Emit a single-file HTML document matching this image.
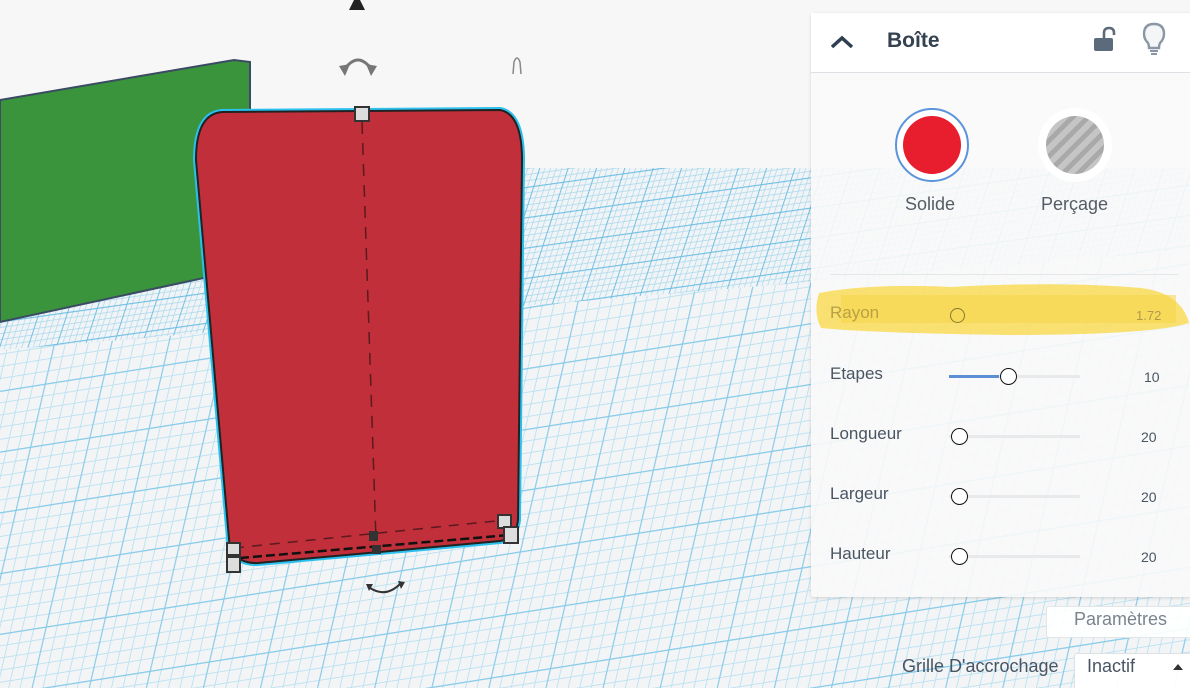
<!DOCTYPE html>
<html><head><meta charset="utf-8">
<style>
html,body{margin:0;padding:0;width:1190px;height:688px;overflow:hidden;background:#f7f7f7;font-family:"Liberation Sans","DejaVu Sans",sans-serif}
#scene{position:absolute;left:0;top:0;width:1190px;height:688px;overflow:hidden}
#panel{position:absolute;left:811px;top:13px;width:379px;height:584px;background:rgba(249,249,249,0.9);box-shadow:0 1px 3px rgba(0,0,0,.15);border-radius:3px 0 0 3px}
#hdr{height:59px;background:#fff;border-bottom:1px solid #dde0e4;position:relative}
.t{position:absolute;color:#3b4a5c;font-size:17px}
.lbl{position:absolute;left:19px;font-size:17px;color:#4a5563}
.val{position:absolute;left:330px;font-size:14px;color:#4a5563}
.track{position:absolute;left:138px;width:131px;height:3px;background:#e8e9ea}
.knob{position:absolute;width:15px;height:15px;border:1.5px solid #111;border-radius:50%;background:#fff;box-sizing:border-box}
</style></head><body>
<div id="scene">
<svg width="1190" height="688" style="position:absolute;left:0;top:0">
<defs>
<pattern id="gNear" width="60" height="60" patternUnits="userSpaceOnUse" patternTransform="translate(0,330) rotate(-9) skewX(-22)">
 <rect width="60" height="60" fill="#f3f4f5"/>
 <path d="M0,12H60M0,24H60M0,36H60M0,48H60M12,0V60M24,0V60M36,0V60M48,0V60" stroke="#bde2f2" stroke-width="1"/>
 <path d="M0,0.5H60M0.5,0V60" stroke="#86cbe9" stroke-width="1.5"/>
</pattern>
<pattern id="gFar" width="30" height="30" patternUnits="userSpaceOnUse" patternTransform="translate(0,170) rotate(-8) skewX(-26)">
 <rect width="30" height="30" fill="#f0f4f6"/>
 <path d="M0,6H30M0,12H30M0,18H30M0,24H30M6,0V30M12,0V30M18,0V30M24,0V30" stroke="#add9ec" stroke-width="0.8"/>
 <path d="M0,0.5H30M0.5,0V30" stroke="#6fbfe4" stroke-width="1.2"/>
</pattern>
</defs>
<polygon points="0,300 520,168 1190,168 1190,688 0,688" fill="url(#gNear)"/>
<polygon points="0,300 520,168 1190,168 1190,250 0,350" fill="url(#gFar)"/>
<!-- green box -->
<polygon points="0,100 234,60 250,62 250,268 0,322" fill="#3a943c" stroke="#3b4b63" stroke-width="2"/>
<!-- red box -->
<path d="M222,112 L500,110 Q522,114 522,160 L518,520 Q516,538 500,541 L258,563 Q240,564 230,550 L196,160 Q196,114 222,112 Z" fill="#c12f3a" stroke="#2bc0ee" stroke-width="6"/>
<path d="M222,112 L500,110 Q522,114 522,160 L518,520 Q516,538 500,541 L258,563 Q240,564 230,550 L196,160 Q196,114 222,112 Z" fill="#c12f3a" stroke="#222" stroke-width="2"/>
<line x1="362" y1="122" x2="376" y2="540" stroke="#5a1a1f" stroke-width="1.5" stroke-dasharray="12,9"/>
<line x1="234" y1="548" x2="505" y2="520" stroke="#5a1a1f" stroke-width="1.5" stroke-dasharray="10,8"/>
<line x1="240" y1="558" x2="510" y2="535" stroke="#111" stroke-width="2.5" stroke-dasharray="9,4"/>
<rect x="355" y="107" width="14" height="14" fill="#ddd" stroke="#333" stroke-width="2"/>
<rect x="369" y="531" width="9" height="10" fill="#333"/>
<rect x="372" y="545" width="9" height="9" fill="#333"/>
<rect x="227" y="543" width="13" height="12" fill="#ddd" stroke="#333" stroke-width="2"/>
<rect x="227" y="557" width="13" height="15" fill="#ddd" stroke="#333" stroke-width="2"/>
<rect x="498" y="515" width="13" height="13" fill="#ddd" stroke="#333" stroke-width="2"/>
<rect x="504" y="527" width="14" height="16" fill="#ddd" stroke="#333" stroke-width="2"/>
<polygon points="349,10 365,10 360,0 354,0" fill="#222"/>
<path d="M344,70 Q358,50 372,70" fill="none" stroke="#777" stroke-width="3"/>
<polygon points="339,66 350,64 345,76" fill="#777"/>
<polygon points="377,66 366,64 371,76" fill="#777"/>
<path d="M513,74 L514,62 Q517,54 520,62 L521,74" fill="none" stroke="#888" stroke-width="1.5"/>
<path d="M370,588 Q386,598 400,584" fill="none" stroke="#333" stroke-width="2"/>
<polygon points="366,584 373,584 369,591" fill="#333"/>
<polygon points="398,581 405,582 401,589" fill="#333"/>
</svg>

<div id="panel">
 <div id="hdr">
  <svg style="position:absolute;left:19px;top:22px" width="24" height="14"><path d="M2,12 L12,3 L22,12" fill="none" stroke="#2f3e50" stroke-width="3.5"/></svg>
  <div class="t" style="left:76px;top:16px;font-size:21px;font-weight:bold;color:#34414f">Boîte</div>
  <svg style="position:absolute;left:282px;top:12px" width="24" height="28"><path d="M11,14 V8 Q11,3 16,3 Q21,3 21,8 V10" fill="none" stroke="#5c6b7b" stroke-width="2.6"/><rect x="1" y="13" width="19" height="13" rx="2" fill="#5c6b7b"/></svg>
  <svg style="position:absolute;left:330px;top:8px" width="26" height="36"><path d="M13,3 Q3,3 3,13 Q3,18 7,22 Q8,24 8,27 H18 Q18,24 19,22 Q23,18 23,13 Q23,3 13,3 Z" fill="#f4f5f6" stroke="#8a96a3" stroke-width="2.4"/><rect x="9" y="29" width="8" height="2" fill="#8a96a3"/><rect x="10" y="32" width="6" height="2" fill="#8a96a3"/></svg>
 </div>
 <div style="position:absolute;left:84px;top:95px;width:74px;height:74px;border:2.5px solid #5b94dc;border-radius:50%;box-sizing:border-box;background:#fff"></div>
 <div style="position:absolute;left:92px;top:103px;width:58px;height:58px;border-radius:50%;background:#e81d2e"></div>
 <div style="position:absolute;left:227px;top:95px;width:74px;height:74px;border-radius:50%;background:#fff"></div>
 <div style="position:absolute;left:235px;top:103px;width:58px;height:58px;border-radius:50%;background:repeating-linear-gradient(135deg,#c5c5c5 0 6px,#a9a9a9 6px 11px)"></div>
 <div class="t" style="left:94px;top:181px;font-size:18px;color:#555c65">Solide</div>
 <div class="t" style="left:230px;top:181px;font-size:18px;color:#555c65">Perçage</div>
 <div style="position:absolute;left:19px;top:261px;width:348px;height:1px;background:#e4e6e8"></div>
 <svg style="position:absolute;left:0;top:260px" width="379" height="70"><path d="M8,20 Q60,10 140,14 Q250,8 330,15 Q370,20 378,50 Q340,62 200,62 Q60,60 10,55 Q2,40 8,20 Z" fill="#f8d949" opacity=".78"/><rect x="30" y="22" width="335" height="28" fill="#f8d64a" opacity=".55"/></svg>
 <div class="lbl" style="top:290px;color:#b9a043">Rayon</div>
 <div class="knob" style="left:139px;top:295px;border-color:#8a7a2a;background:transparent"></div>
 <div class="val" style="top:295px;left:325px;font-size:13px;color:#b09a4a">1.72</div>

 <div class="lbl" style="top:351px">Etapes</div>
 <div class="track" style="top:362px"></div>
 <div style="position:absolute;left:138px;top:362px;width:50px;height:3px;background:#5b8ed2"></div>
 <div class="knob" style="left:189px;top:355px;width:17px;height:17px"></div>
 <div class="val" style="top:356px;left:333px">10</div>

 <div class="lbl" style="top:411px">Longueur</div>
 <div class="track" style="top:422px"></div>
 <div class="knob" style="left:140px;top:415px;width:17px;height:17px"></div>
 <div class="val" style="top:416px">20</div>

 <div class="lbl" style="top:471px">Largeur</div>
 <div class="track" style="top:482px"></div>
 <div class="knob" style="left:140px;top:475px;width:17px;height:17px"></div>
 <div class="val" style="top:476px">20</div>

 <div class="lbl" style="top:531px">Hauteur</div>
 <div class="track" style="top:542px"></div>
 <div class="knob" style="left:140px;top:535px;width:17px;height:17px"></div>
 <div class="val" style="top:536px">20</div>
</div>

<div style="position:absolute;left:1046px;top:606px;width:150px;height:30px;background:rgba(255,255,255,.92);border:1px solid #e3e5e7;border-radius:3px"></div>
<div style="position:absolute;left:1074px;top:609px;font-size:18px;color:#7a838e">Paramètres</div>
<div style="position:absolute;left:902px;top:656px;font-size:18px;color:#4a5563">Grille D'accrochage</div>
<div style="position:absolute;left:1074px;top:653px;width:120px;height:40px;background:rgba(255,255,255,.95);border:1px solid #dfe1e4;border-radius:3px"></div>
<div style="position:absolute;left:1087px;top:656px;font-size:18px;color:#4a5563">Inactif</div>
<svg style="position:absolute;left:1173px;top:663px" width="10" height="8"><polygon points="0,7 5,1 10,7" fill="#333"/></svg>
</div>
</body></html>
